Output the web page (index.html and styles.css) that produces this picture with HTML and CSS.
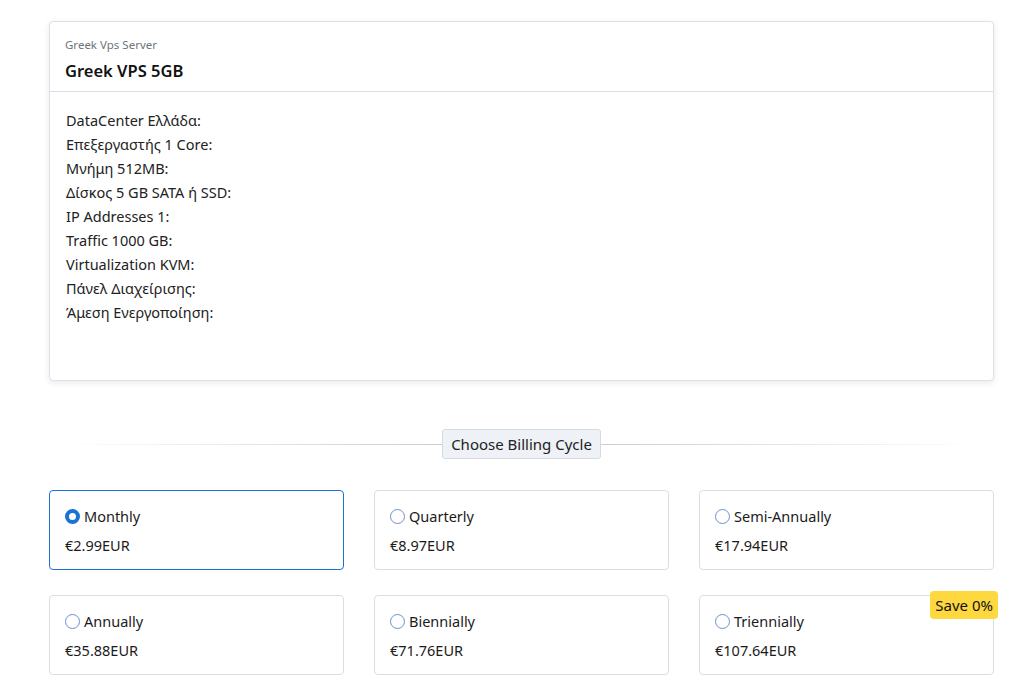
FILE: index.html
```html
<!DOCTYPE html>
<html>
<head>
<meta charset="utf-8">
<title>Greek VPS 5GB</title>
<link rel="stylesheet" href="styles.css">
</head>
<body>
<div class="page">
  <div class="product-card">
    <div class="product-header">
      <div class="product-group">Greek Vps Server</div>
      <div class="product-name">Greek VPS 5GB</div>
    </div>
    <div class="product-body">
      <div>DataCenter Ελλάδα:</div>
      <div>Επεξεργαστής 1 Core:</div>
      <div>Μνήμη 512MB:</div>
      <div>Δίσκος 5 GB SATA ή SSD:</div>
      <div>IP Addresses 1:</div>
      <div>Traffic 1000 GB:</div>
      <div>Virtualization KVM:</div>
      <div>Πάνελ Διαχείρισης:</div>
      <div>Άμεση Ενεργοποίηση:</div>
    </div>
  </div>

  <div class="section-divider">
    <span class="divider-line"></span>
    <span class="divider-label">Choose Billing Cycle</span>
    <span class="divider-line"></span>
  </div>

  <div class="cycles">
    <label class="cycle selected">
      <span class="cycle-title"><span class="radio checked"></span>Monthly</span>
      <span class="cycle-price">€2.99EUR</span>
    </label>
    <label class="cycle">
      <span class="cycle-title"><span class="radio"></span>Quarterly</span>
      <span class="cycle-price">€8.97EUR</span>
    </label>
    <label class="cycle">
      <span class="cycle-title"><span class="radio"></span>Semi-Annually</span>
      <span class="cycle-price">€17.94EUR</span>
    </label>
    <label class="cycle">
      <span class="cycle-title"><span class="radio"></span>Annually</span>
      <span class="cycle-price">€35.88EUR</span>
    </label>
    <label class="cycle">
      <span class="cycle-title"><span class="radio"></span>Biennially</span>
      <span class="cycle-price">€71.76EUR</span>
    </label>
    <label class="cycle">
      <span class="cycle-title"><span class="radio"></span>Triennially</span>
      <span class="cycle-price">€107.64EUR</span>
      <span class="save-badge">Save 0%</span>
    </label>
  </div>
</div>
</body>
</html>
```

FILE: styles.css
```css
* { box-sizing: border-box; }
html, body { margin: 0; padding: 0; background: #fff; }
body {
  font-family: "Noto Sans", "Open Sans", "DejaVu Sans", sans-serif;
  color: #212529;
  font-size: 14px;
}
.page {
  width: 945px;
  margin-left: 49px;
  padding-top: 21px;
}
.product-card {
  border: 1px solid #dde1e8;
  border-radius: 4px;
  box-shadow: 0 2px 6px rgba(60, 70, 100, 0.12);
  background: #fff;
  height: 360px;
}
.product-header {
  padding: 15px 15px 8px 15px;
  border-bottom: 1px solid #d8dde6;
}
.product-group {
  font-size: 11.5px;
  color: #6c757d;
  line-height: 16px;
}
.product-name {
  font-size: 16.5px;
  font-weight: 600;
  color: #111;
  line-height: 24px;
  margin-top: 6px;
}
.product-body {
  padding: 16px 16px 0 16px;
  font-size: 14.5px;
  line-height: 24px;
  color: #222;
}
.section-divider {
  display: flex;
  align-items: center;
  margin-top: 48px;
  padding: 0 15px;
}
.divider-line {
  flex: 1;
  height: 1px;
}
.divider-line:first-child {
  background: linear-gradient(to right, rgba(200,200,205,0), #c9ccd2);
}
.divider-line:last-child {
  background: linear-gradient(to right, #c9ccd2, rgba(200,200,205,0));
}
.divider-label {
  background: #eef1f6;
  border: 1px solid #d5dae3;
  border-radius: 3px;
  padding: 0 8px;
  height: 30px;
  line-height: 28px;
  font-size: 15px;
  color: #222;
}
.cycles {
  display: grid;
  grid-template-columns: repeat(3, 1fr);
  column-gap: 30px;
  row-gap: 25px;
  margin-top: 31px;
}
.cycle {
  position: relative;
  display: flex;
  flex-direction: column;
  height: 80px;
  border: 1px solid #d8dde6;
  border-radius: 4px;
  padding: 15px 15px 0 15px;
}
.cycle.selected {
  border-color: #1a73d4;
}
.cycle-title {
  display: flex;
  align-items: center;
  font-size: 14.5px;
  line-height: 20px;
  color: #1b1b1b;
}
.radio {
  width: 15px;
  height: 15px;
  border-radius: 50%;
  border: 1px solid #6c8fd0;
  margin-right: 4px;
  flex-shrink: 0;
}
.radio.checked {
  border: 4px solid #1a73d4;
  background: #fff;
}
.cycle-price {
  margin-top: 9px;
  font-size: 14.5px;
  line-height: 20px;
  color: #1b1b1b;
}
.save-badge {
  position: absolute;
  top: -5px;
  right: -5px;
  background: #fdd83e;
  border-radius: 4px;
  padding: 0 5px;
  height: 28px;
  line-height: 28px;
  font-size: 15px;
  color: #111;
}
```
